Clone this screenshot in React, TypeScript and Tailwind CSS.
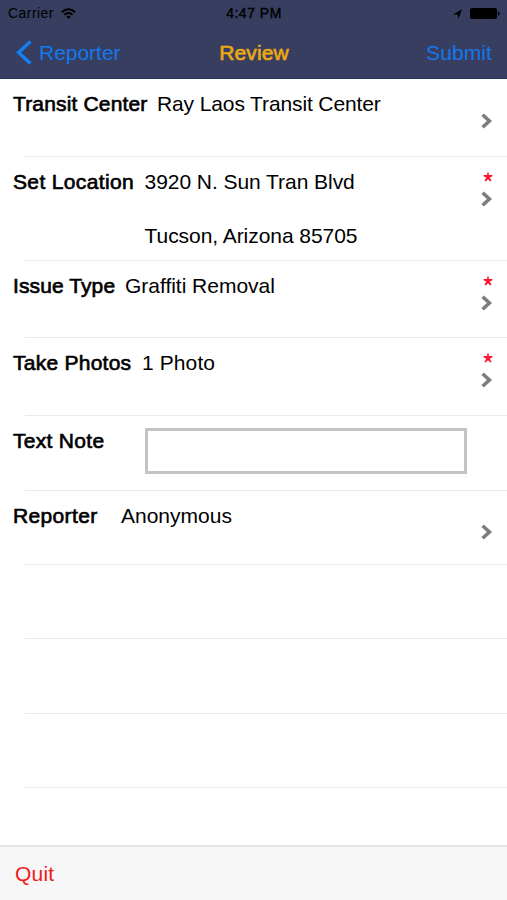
import React from 'react';

interface Row {
  label: string;
  lines: string[];
  height: string;
  labelStyle: string;
  valueStyle: string;
  required?: boolean;
}

const rows: Row[] = [
  {
    label: 'Transit Center',
    lines: ['Ray Laos Transit Center'],
    height: 'h-[78px]',
    labelStyle: 'w-[144px] tracking-[0.16px]',
    valueStyle: 'tracking-[-0.12px]',
  },
  {
    label: 'Set Location',
    lines: ['3920 N. Sun Tran Blvd', 'Tucson, Arizona 85705'],
    height: 'h-[104px]',
    labelStyle: 'w-[131.5px] tracking-[0.36px]',
    valueStyle: 'tracking-[-0.05px]',
    required: true,
  },
  {
    label: 'Issue Type',
    lines: ['Graffiti Removal'],
    height: 'h-[77px]',
    labelStyle: 'w-[112px] tracking-[0.1px]',
    valueStyle: 'tracking-[-0.02px]',
    required: true,
  },
  {
    label: 'Take Photos',
    lines: ['1 Photo'],
    height: 'h-[78px]',
    labelStyle: 'w-[129px] tracking-[0.25px]',
    valueStyle: 'tracking-[0.1px]',
    required: true,
  },
];

const Chevron = () => (
  <svg className="block h-4 w-3" viewBox="0 0 12 16" fill="none" stroke="#7d7d7d" strokeWidth="3.6">
    <path d="M1.6 1.7 8.4 8l-6.8 6.3" />
  </svg>
);

const Star = () => (
  <svg className="block h-[10px] w-[10px]" viewBox="0 0 10 10" fill="#fb1834">
    <path d="M4.3.4h1.4L5.9 3.1 9.3 3.1 9.6 4.2 6.8 5.5 8.5 8.8 7.4 9.6 5 7.3 2.6 9.6 1.5 8.8 3.2 5.5.4 4.2.7 3.1 4.1 3.1z" />
  </svg>
);

const Separator = () => <div className="ml-[25px] h-px shrink-0 bg-[#e9e9e9]" />;

const Label = ({ text, className }: { text: string; className: string }) => (
  <div className={`shrink-0 whitespace-nowrap [-webkit-text-stroke:0.65px_black] ${className}`}>{text}</div>
);

const StatusBar = () => (
  <div className="flex h-[27px] items-center pl-2 pr-[7px] text-[14px] leading-[27px] text-black">
    <div className="flex flex-1 items-center gap-[7px]">
      <span className="tracking-[0.45px]">Carrier</span>
      <svg className="h-[11px] w-[15px]" viewBox="0 0 15 11" fill="none" stroke="black" strokeWidth="2">
        <path d="M.8 4.2C4.7.3 10.3.3 14.2 4.2M3.4 6.8c2.4-2.3 5.8-2.3 8.2 0" />
        <path d="M5.1 8.6c1.4-1.3 3.4-1.3 4.8 0L7.5 11z" fill="black" stroke="none" />
      </svg>
    </div>
    <span className="[-webkit-text-stroke:0.4px_black] tracking-[0.5px]">4:47 PM</span>
    <div className="flex flex-1 items-center justify-end gap-[8px]">
      <svg className="h-[10px] w-[9px]" viewBox="0 0 9 10" fill="black">
        <path d="M9 .3 5.6 9.8 4.5 5.6 0 5.4z" />
      </svg>
      <svg className="h-[11px] w-[30px]" viewBox="0 0 30 11" fill="black">
        <rect width="27" height="11" rx="2" />
        <path d="M28 3.5c2.2.4 2.2 3.6 0 4z" />
      </svg>
    </div>
  </div>
);

export default function App() {
  return (
    <div className="flex h-[900px] w-[507px] flex-col overflow-hidden bg-white font-['Liberation_Sans',Arial,sans-serif] text-[21px] leading-[26px] text-black">
      <header className="h-[79px] shrink-0 border-b border-[#2c3358] bg-[#373e60]">
        <StatusBar />
        <div className="flex h-[51px] items-center pl-4 pr-[15px] text-[#1478ee]">
          <button className="flex flex-1 items-center gap-[7px]">
            <svg className="h-[25px] w-4" viewBox="0 0 16 25" fill="none" stroke="#1280f5" strokeWidth="3.4">
              <path d="M14.4 1.5 2.6 12.5l11.8 11" />
            </svg>
            <span className="tracking-[-0.02px]">Reporter</span>
          </button>
          <h1 className="tracking-[0.15px] text-[#eba914] [-webkit-text-stroke:0.65px_#eba914]">Review</h1>
          <button className="flex-1 text-right tracking-[0.1px]">Submit</button>
        </div>
      </header>

      <main className="flex flex-1 flex-col">
        {rows.map((row) => (
          <section key={row.label} className={`flex flex-col ${row.height}`}>
            <div className="flex flex-1 pl-[13px] pr-[14px] pt-3">
              <Label text={row.label} className={row.labelStyle} />
              <div className={`flex flex-1 flex-col gap-7 whitespace-nowrap ${row.valueStyle}`}>
                {row.lines.map((line) => (
                  <span key={line}>{line}</span>
                ))}
              </div>
              <div className="flex flex-col items-end">
                <div className="h-[22px] pt-[3px]">{row.required && <Star />}</div>
                <Chevron />
              </div>
            </div>
            <Separator />
          </section>
        ))}

        <section className="flex h-[75px] flex-col">
          <div className="flex flex-1 pl-[13px] pt-3">
            <Label text="Text Note" className="w-[132px] tracking-[0.3px]" />
            <input className="h-[46px] w-[322px] border-[3px] border-[#c3c3c3] bg-white px-2 outline-none" />
          </div>
          <Separator />
        </section>

        <section className="flex h-[74px] flex-col">
          <div className="flex flex-1 pl-[13px] pr-[14px] pt-3">
            <Label text="Reporter" className="w-[108px] tracking-[0.35px]" />
            <span className="flex-1">Anonymous</span>
            <div className="pt-[21px]">
              <Chevron />
            </div>
          </div>
          <Separator />
        </section>

        {/* empty table rows */}
        <div className="flex h-[74px] flex-col justify-end"><Separator /></div>
        <div className="flex h-[75px] flex-col justify-end"><Separator /></div>
        <div className="flex h-[74px] flex-col justify-end"><Separator /></div>
      </main>

      <footer className="flex h-[55px] shrink-0 items-center border-t-2 border-[#e4e4e4] bg-[#f7f7f7] pl-[15px] text-[#ee1c1c]">
        <button className="tracking-[0.2px]">Quit</button>
      </footer>
    </div>
  );
}
